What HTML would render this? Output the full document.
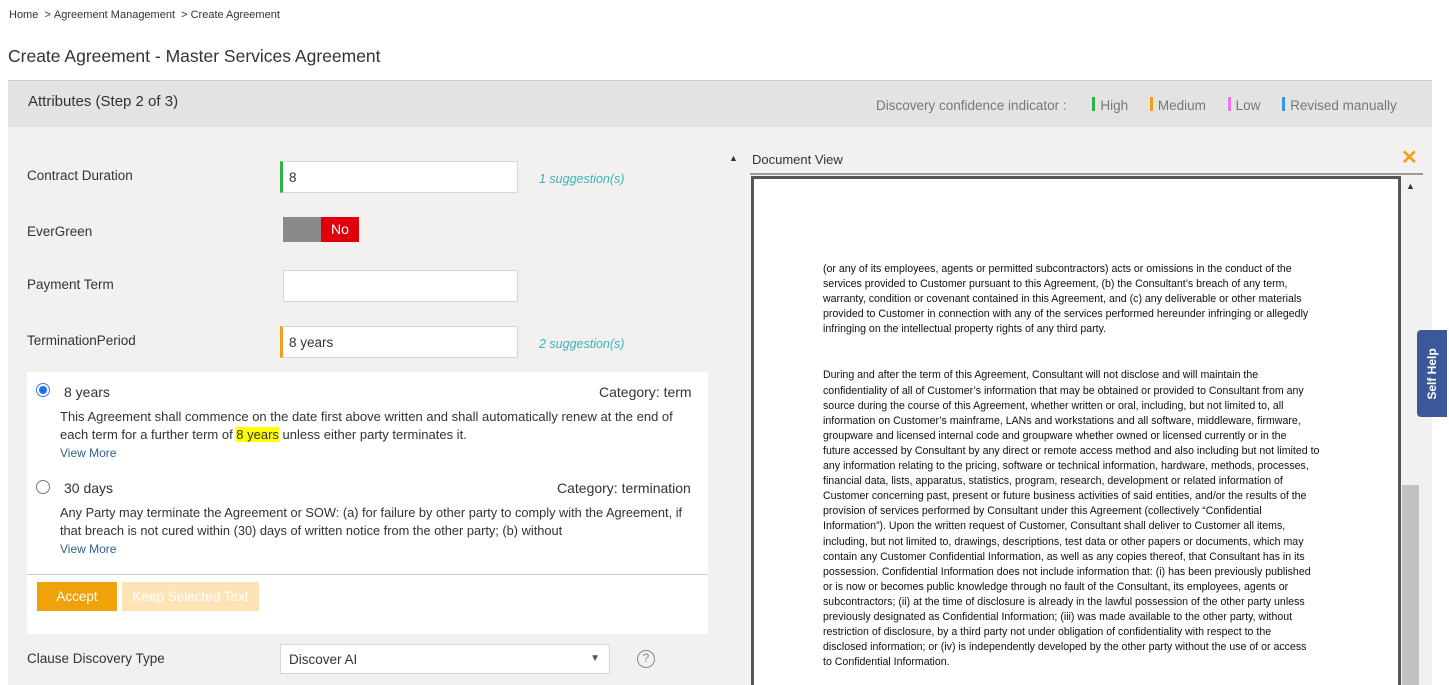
<!DOCTYPE html>
<html><head><style>
*{margin:0;padding:0;box-sizing:border-box}
body{width:1449px;height:685px;overflow:hidden;background:#fff;font-family:"Liberation Sans",sans-serif;color:#222;position:relative}
.a{position:absolute}
.lbl{font-size:13.5px;color:#333}
.inp{background:#fff;border:1px solid #d6d6d6;height:32px;font-size:13.5px;padding:8px 6px;color:#333}
.sug{font-size:12.5px;color:#3ab3b8;font-style:italic}
.doc div{font-size:10.6px;line-height:15.1px;color:#111;white-space:nowrap}
</style></head><body>
<div class="a" style="left:9px;top:9px;font-size:11px;color:#333">Home &nbsp;&gt;&nbsp;Agreement Management &nbsp;&gt;&nbsp;Create Agreement</div>
<div class="a" style="left:8px;top:46px;font-size:17.5px;color:#333">Create Agreement - Master Services Agreement</div>
<div class="a" style="left:8px;top:80px;width:1424px;height:605px;background:#f2f1f0"></div>
<div class="a" style="left:8px;top:80px;width:1424px;height:47px;background:#e4e3e3;border-top:1px solid #ccc"></div>
<div class="a" style="left:28px;top:93px;font-size:15px;color:#333">Attributes (Step 2 of 3)</div>
<div class="a" style="left:876px;top:97px;font-size:13.5px;color:#777;white-space:nowrap">Discovery confidence indicator :
<span style="display:inline-block;width:3px;height:14px;background:#2db34a;margin:0 5px 0 22px;vertical-align:-1px"></span>High
<span style="display:inline-block;width:3px;height:14px;background:#f0a01c;margin:0 5px 0 18px;vertical-align:-1px"></span>Medium
<span style="display:inline-block;width:3px;height:14px;background:#f46ef0;margin:0 5px 0 18px;vertical-align:-1px"></span>Low
<span style="display:inline-block;width:3px;height:14px;background:#3d93dd;margin:0 5px 0 18px;vertical-align:-1px"></span>Revised manually</div>

<div class="a lbl" style="left:27px;top:168px">Contract Duration</div>
<div class="a inp" style="left:280px;top:161px;width:238px;border-left:3px solid #2db34a">8</div>
<div class="a sug" style="left:539px;top:172px">1 suggestion(s)</div>
<div class="a lbl" style="left:27px;top:224px">EverGreen</div>
<div class="a" style="left:283px;top:217px;width:38px;height:25px;background:#8a8a8a"></div>
<div class="a" style="left:321px;top:217px;width:38px;height:25px;background:#e0000b;color:#fff;font-size:14px;text-align:center;line-height:25px">No</div>
<div class="a lbl" style="left:27px;top:277px">Payment Term</div>
<div class="a inp" style="left:283px;top:270px;width:235px"></div>
<div class="a lbl" style="left:27px;top:333px">TerminationPeriod</div>
<div class="a inp" style="left:280px;top:326px;width:238px;border-left:3px solid #f0a01c">8 years</div>
<div class="a sug" style="left:539px;top:337px">2 suggestion(s)</div>

<div class="a" style="left:27px;top:372px;width:681px;height:262px;background:#fff"></div>
<div class="a" style="left:36px;top:383px;width:14px;height:14px;border-radius:50%;border:1px solid #3b78e7;background:#fff"><div style="margin:2px;width:8px;height:8px;border-radius:50%;background:#1a73e8"></div></div>
<div class="a" style="left:64px;top:384px;font-size:14px;color:#333">8 years</div>
<div class="a" style="left:599px;top:384px;font-size:14px;color:#333">Category: term</div>
<div class="a" style="left:60px;top:408px;font-size:13px;line-height:18px;color:#333;white-space:nowrap">This Agreement shall commence on the date first above written and shall automatically renew at the end of<br>each term for a further term of <span style="background:#ffff00">8 years</span> unless either party terminates it.</div>
<div class="a" style="left:60px;top:446px;font-size:12px;color:#2f5f8a">View More</div>
<div class="a" style="left:36px;top:480px;width:14px;height:14px;border-radius:50%;border:1px solid #777;background:#fff"></div>
<div class="a" style="left:64px;top:480px;font-size:14px;color:#333">30 days</div>
<div class="a" style="left:557px;top:480px;font-size:14px;color:#333">Category: termination</div>
<div class="a" style="left:60px;top:504px;font-size:12.8px;line-height:18px;color:#333;white-space:nowrap">Any Party may terminate the Agreement or SOW: (a) for failure by other party to comply with the Agreement, if<br>that breach is not cured within (30) days of written notice from the other party; (b) without</div>
<div class="a" style="left:60px;top:542px;font-size:12px;color:#2f5f8a">View More</div>
<div class="a" style="left:27px;top:574px;width:681px;height:1px;background:#ccc"></div>
<div class="a" style="left:37px;top:582px;width:80px;height:29px;background:#f0a20b;color:#fff;font-size:13.5px;text-align:center;line-height:29px">Accept</div>
<div class="a" style="left:122px;top:582px;width:137px;height:29px;background:#fde3b6;color:#fff;font-size:13.5px;text-align:center;line-height:29px">Keep Selected Text</div>
<div class="a lbl" style="left:27px;top:651px">Clause Discovery Type</div>
<div class="a inp" style="left:280px;top:644px;width:330px;height:30px;padding:7px 8px">Discover AI<span style="position:absolute;right:9px;top:8px;font-size:10px;color:#555">▼</span></div>
<div class="a" style="left:637px;top:650px;width:18px;height:18px;border-radius:50%;border:1.5px solid #888;color:#888;font-size:12px;text-align:center;line-height:15px">?</div>

<div class="a" style="left:729px;top:153px;font-size:9px;color:#333">▲</div>
<div class="a" style="left:752px;top:152px;font-size:13px;color:#333">Document View</div>
<div class="a" style="left:1401px;top:145px;font-size:20px;color:#f0a01c;font-weight:bold">✕</div>
<div class="a" style="left:750px;top:173px;width:673px;height:512px;background:#f2f1f0;border-top:2px solid #999"></div>
<div class="a" style="left:751px;top:176px;width:650px;height:509px;background:#fff;border:3px solid #555;border-bottom:none"></div>
<div class="a" style="left:1406px;top:181px;font-size:9px;color:#333">▲</div>
<div class="a" style="left:1402px;top:485px;width:17px;height:200px;background:#c1c1c1"></div>
<div class="a doc" style="left:823px;top:262px">
<div>(or any of its employees, agents or permitted subcontractors) acts or omissions in the conduct of the</div>
<div>services provided to Customer pursuant to this Agreement, (b) the Consultant’s breach of any term,</div>
<div>warranty, condition or covenant contained in this Agreement, and (c) any deliverable or other materials</div>
<div>provided to Customer in connection with any of the services performed hereunder infringing or allegedly</div>
<div>infringing on the intellectual property rights of any third party.</div>
<div style="margin-top:31px">During and after the term of this Agreement, Consultant will not disclose and will maintain the</div>
<div>confidentiality of all of Customer’s information that may be obtained or provided to Consultant from any</div>
<div>source during the course of this Agreement, whether written or oral, including, but not limited to, all</div>
<div>information on Customer’s mainframe, LANs and workstations and all software, middleware, firmware,</div>
<div>groupware and licensed internal code and groupware whether owned or licensed currently or in the</div>
<div>future accessed by Consultant by any direct or remote access method and also including but not limited to</div>
<div>any information relating to the pricing, software or technical information, hardware, methods, processes,</div>
<div>financial data, lists, apparatus, statistics, program, research, development or related information of</div>
<div>Customer concerning past, present or future business activities of said entities, and/or the results of the</div>
<div>provision of services performed by Consultant under this Agreement (collectively “Confidential</div>
<div>Information”). Upon the written request of Customer, Consultant shall deliver to Customer all items,</div>
<div>including, but not limited to, drawings, descriptions, test data or other papers or documents, which may</div>
<div>contain any Customer Confidential Information, as well as any copies thereof, that Consultant has in its</div>
<div>possession. Confidential Information does not include information that: (i) has been previously published</div>
<div>or is now or becomes public knowledge through no fault of the Consultant, its employees, agents or</div>
<div>subcontractors; (ii) at the time of disclosure is already in the lawful possession of the other party unless</div>
<div>previously designated as Confidential Information; (iii) was made available to the other party, without</div>
<div>restriction of disclosure, by a third party not under obligation of confidentiality with respect to the</div>
<div>disclosed information; or (iv) is independently developed by the other party without the use of or access</div>
<div>to Confidential Information.</div>
</div>
<div class="a" style="left:1417px;top:330px;width:30px;height:87px;background:#3b5998;border-radius:4px 0 0 4px"></div>
<div class="a" style="left:1432px;top:374px;transform:translate(-50%,-50%) rotate(-90deg);color:#fff;font-size:12px;font-weight:bold;white-space:nowrap">Self Help</div>
</body></html>
